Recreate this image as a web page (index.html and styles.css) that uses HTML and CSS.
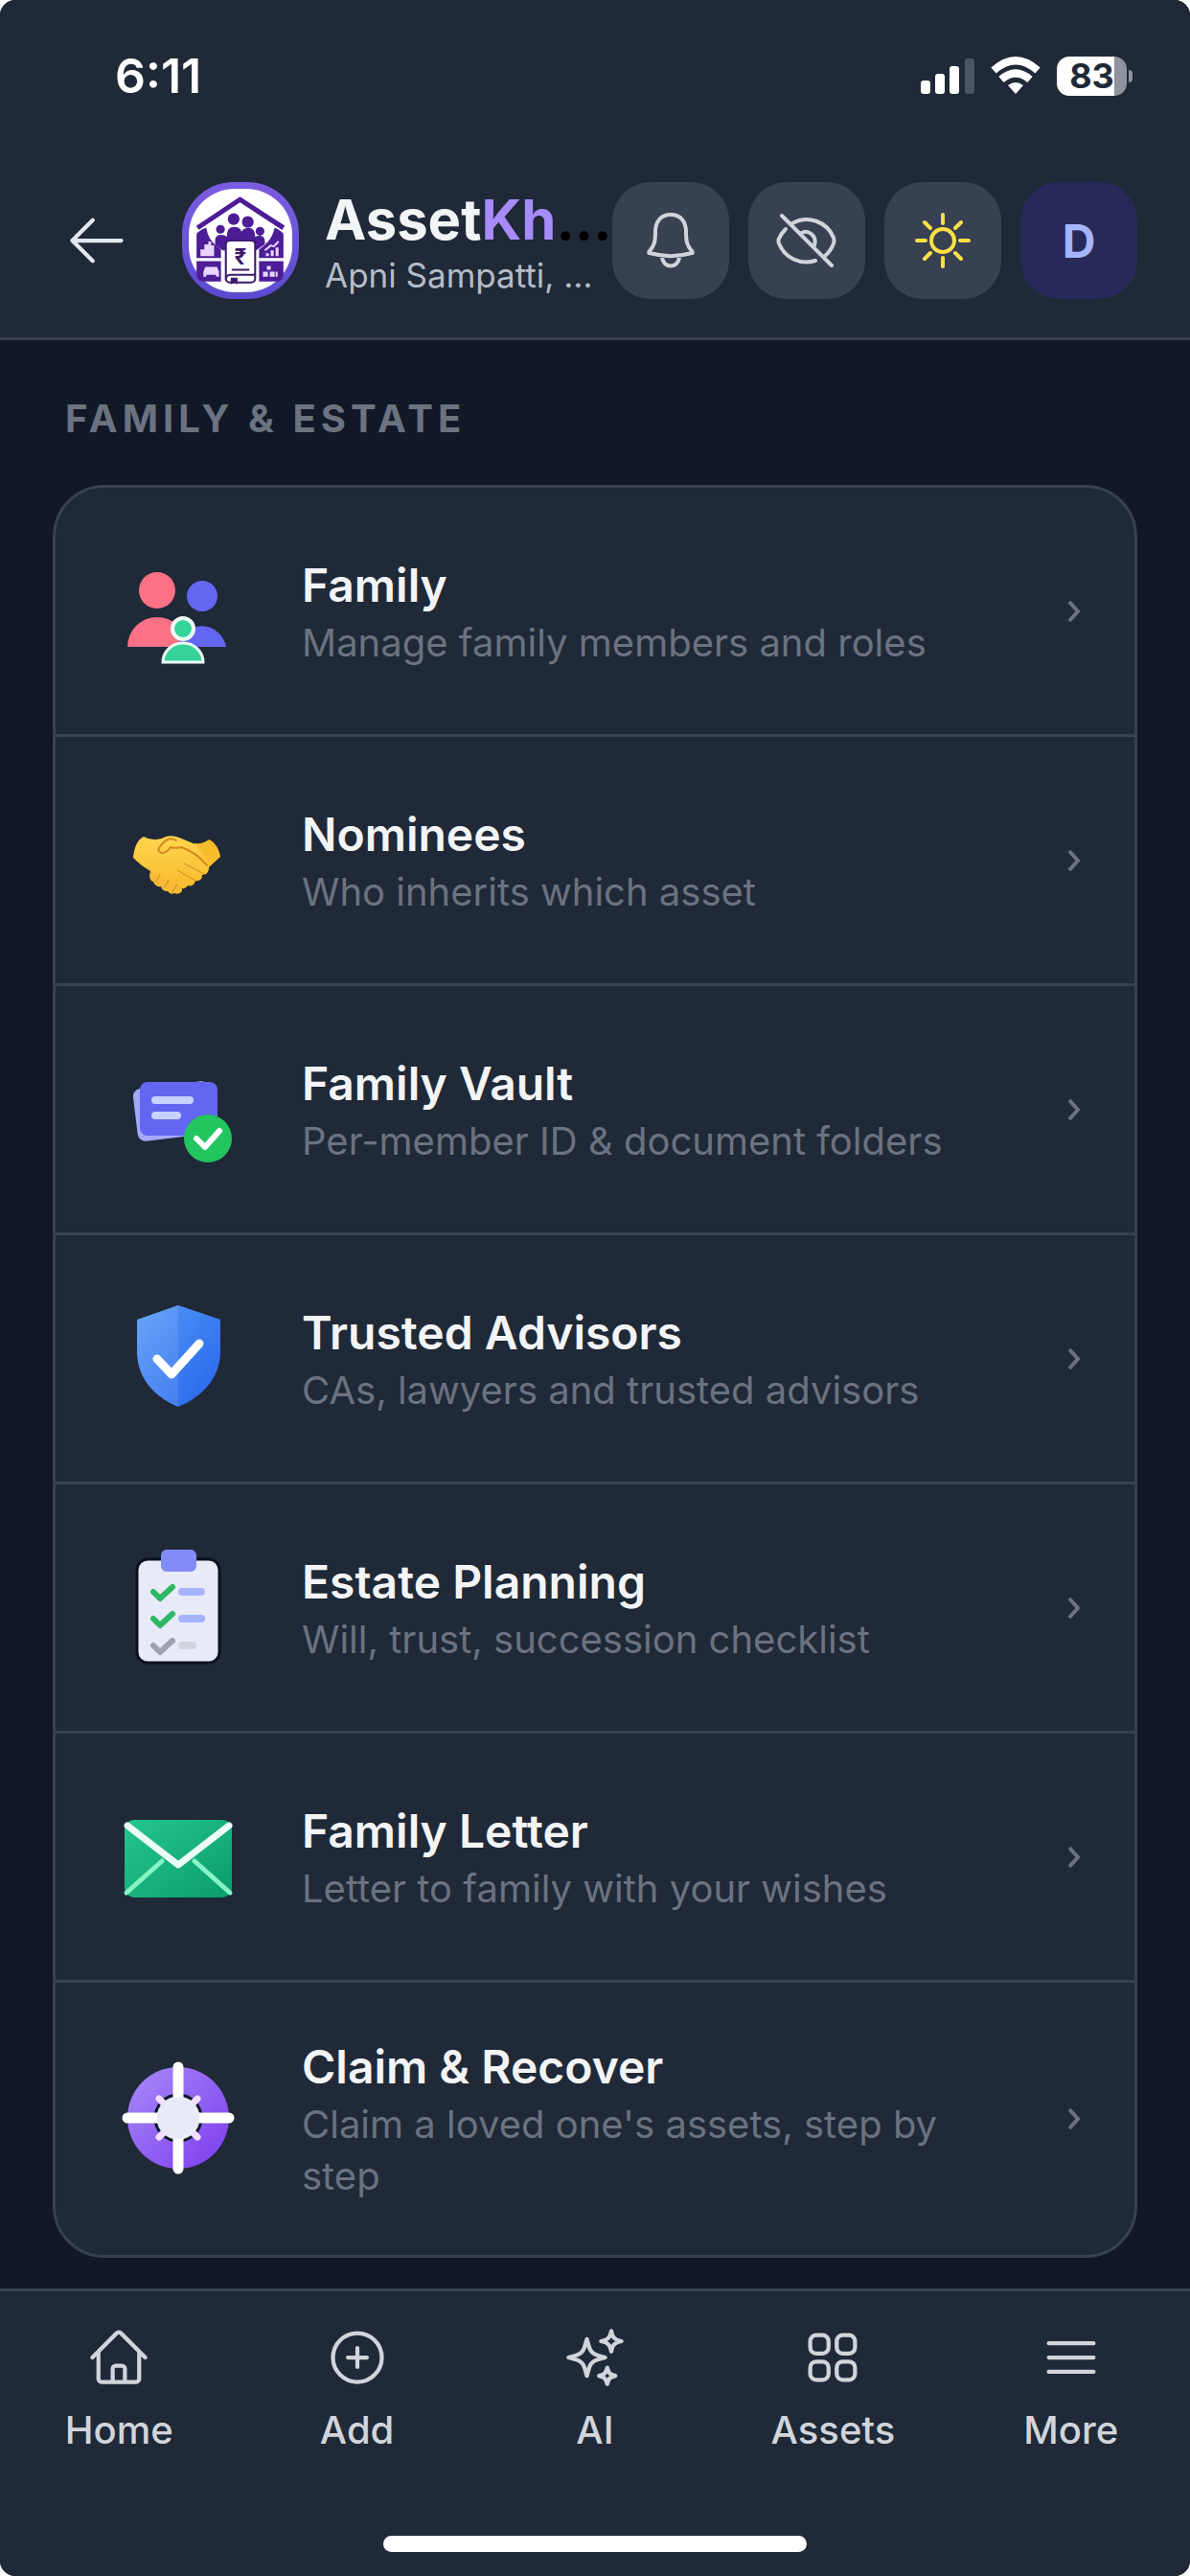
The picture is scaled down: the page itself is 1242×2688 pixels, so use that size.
FILE: index.html
```html
<!DOCTYPE html>
<html lang="en">
<head>
    <meta charset="UTF-8">
    <meta name="viewport" content="width=device-width, initial-scale=1.0">
    <title>Family &amp; Estate</title>
    <link rel="stylesheet" href="styles.css">
</head>
<body>
    <div class="app">
        <header class="top">
            <div class="status-bar">
                <span class="time">6:11</span>
                <div class="status-icons">
                    <svg width="56" height="40" viewBox="0 0 56 40" fill="#fff">
                        <rect x="0" y="25" width="10" height="14" rx="3"/>
                        <rect x="15" y="18" width="10" height="21" rx="3"/>
                        <rect x="30" y="10" width="10" height="29" rx="3"/>
                        <rect x="46" y="2" width="10" height="37" rx="3" fill="#4b5563"/>
                    </svg>
                    <svg width="52" height="40" viewBox="0 0 52 40" fill="none" stroke="#fff" stroke-width="8">
                        <path d="M3 14.500Q26 -6 49 14.500"/>
                        <path d="M11 24Q26 11 41 24"/>
                        <path d="M26 39l-8-9q8-6 16 0z" fill="#fff" stroke="none"/>
                    </svg>
                    <div class="battery"><span class="battery-level">83</span></div>
                </div>
            </div>
            <div class="toolbar">
                <button class="back" aria-label="Back">
                    <svg class="icon" viewBox="0 0 24 24"><path d="M10.500 19.500 3 12m0 0 7.500-7.500M3 12h18"/></svg>
                </button>
                <div class="logo">
                    <svg viewBox="8 8 106 106">
                        <g fill="#4c1d95">
                            <path d="M17 48 60.500 19 105 48" fill="none" stroke="#4c1d95" stroke-width="5"/>
                            <path d="M16 54q5-5 10-6 2 14 15 22v9H16z"/>
                            <path d="M16 82h25v21H24q-8 0-8-8z"/>
                            <path d="M105 54q-5-5-9-6-3 14-16 22v9h25z"/>
                            <path d="M80 82h25v13q0 8-8 8H80z"/>
                            <circle cx="54" cy="39" r="6"/>
                            <circle cx="68.500" cy="42" r="6"/>
                            <circle cx="40.500" cy="49.500" r="4.500"/>
                            <circle cx="81" cy="51.500" r="4.500"/>
                            <path d="M35 66v-5q0-6 6-6 4 0 6 2 0-10 7-10t8 5q2-4 7-4 7 0 7 9 2-1 5-1 5 0 5 6v3l-9 6H43z"/>
                        </g>
                        <rect x="46" y="61" width="30" height="43" rx="4" fill="#fff" stroke="#3b1a6b" stroke-width="2"/>
                        <path d="M46 101q0-5 5-5h25M52 91h18" fill="none" stroke="#3b1a6b" stroke-width="2"/>
                        <path d="M51 99h7v7l-3-2-4 2z" fill="#3b1a6b"/>
                        <text class="rupee" x="61" y="86">₹</text>
                        <g fill="#e9d5ff">
                            <path d="M20 77V70h4v-5h4v-3h3v4h3v11z"/>
                            <path d="M23 93l2-5h12l2 5v5h-3v-2H26v2h-3z"/>
                            <path d="M87 77v-3h3v3zM92 77v-6h3v6zM97 77v-9h3v9z"/>
                            <path d="M84 98v-5h5v5zM91 98v-5h5v5zM97 98v-5h2v5zM88 91v-4h4v4z"/>
                        </g>
                        <path d="M86 71l6-5 3 1 5-5" fill="none" stroke="#e9d5ff" stroke-width="2"/>
                    </svg>
                </div>
                <div class="brand">
                    <h1><span class="brand-asset">Asset</span><span class="brand-accent">Kh</span>…</h1>
                    <p>Apni Sampatti, …</p>
                </div>
                <div class="actions">
                    <button class="action" aria-label="Notifications">
                        <svg class="icon" viewBox="0 0 68 68"><path d="M34 7C23 7 18 15 18 25c0 10-1 14-6 20-1 1-1 2 0 2 14 4 30 4 44 0 1 0 1-1 0-2-5-6-6-10-6-20C50 15 45 7 34 7zM25 50c0 14 18 14 18 0"/></svg>
                    </button>
                    <button class="action" aria-label="Hide values">
                        <svg class="icon" viewBox="0 0 68 68"><path d="M8 8l52 52M19 16c16-9 36-2 43 15q1 3 0 6-3 8-9 13M12 22q-5 5-7 10-1 2 0 5c6 15 22 23 38 18M27 27c8-6 18 2 15 12"/></svg>
                    </button>
                    <button class="action action-theme" aria-label="Light mode">
                        <svg class="icon" viewBox="0 0 68 68"><circle cx="34" cy="34" r="12"/><path d="M34 7v9M34 52v9M7 34h9M52 34h9M15 15l6 6M47 47l6 6M15 53l6-6M47 21l6-6"/></svg>
                    </button>
                    <button class="action action-user" aria-label="Profile">D</button>
                </div>
            </div>
        </header>

        <main class="content">
            <h2>FAMILY &amp; ESTATE</h2>
            <nav class="card">
                <a class="row" href="#family">
                    <svg class="row-icon" viewBox="0 0 120 120">
                        <circle cx="38" cy="38" r="19" fill="#fb7185"/>
                        <path d="M7 97a31 31 0 0 1 62 0z" fill="#fb7185"/>
                        <circle cx="85" cy="44" r="16" fill="#6366f1"/>
                        <path d="M59 97a26 27 0 0 1 51 0z" fill="#6366f1"/>
                        <circle cx="65" cy="78" r="11" fill="#34d399" stroke="#ecfdf5" stroke-width="4"/>
                        <path d="M44 113a21 20 0 0 1 42 0z" fill="#34d399" stroke="#ecfdf5" stroke-width="3"/>
                    </svg>
                    <div class="row-text">
                        <h3>Family</h3>
                        <p>Manage family members and roles</p>
                    </div>
                    <svg class="chevron" viewBox="0 0 16 24"><path d="M4 2l9 10-9 10"/></svg>
                </a>
                <a class="row" href="#nominees">
                    <svg class="row-icon" viewBox="0 0 120 120">
                        <defs>
                            <linearGradient id="hand" x1="0" y1="0" x2="0" y2="1">
                                <stop offset="0" stop-color="#ffd54f"/>
                                <stop offset="1" stop-color="#f8bb2d"/>
                            </linearGradient>
                        </defs>
                        <path d="M77 42q9 1 15-4c7 3 11 11 12 18L92 67 70 60z" fill="#f8bd2c"/>
                        <path d="M31 71q4-2 8 4 8-2 11 5 7-1 8 6 7 0 6 6-3 4-8 2-4 2-7-2-6 0-7-5-6 1-8-5-6-2-3-11z" fill="#f6ba36"/>
                        <path d="M13 57C14 47 17 38 24 35q5 3 13 3 5 0 10-3 7-2 14 1l17 7c6 8 10 13 13 20q3 7-2 11l-4 1q0 7-7 6-2 7-8 5-3 5-8 2c-9-6-19-10-31-17-7-4-13-9-18-14z" fill="url(#hand)"/>
                        <g fill="none" stroke="#d08a1c" stroke-width="2" stroke-linecap="round">
                            <path d="M58 39c-8-5-15 2-19 10 4 6 10 2 13-3 5 2 8 0 11 0 9 3 19 9 27 19"/>
                            <path d="M66 63l21 11M59 70l19 11" stroke-width="1"/>
                            <path d="M41 74l-4 8M50 80l-4 8M58 86l-4 7" stroke-width="1"/>
                        </g>
                    </svg>
                    <div class="row-text">
                        <h3>Nominees</h3>
                        <p>Who inherits which asset</p>
                    </div>
                    <svg class="chevron" viewBox="0 0 16 24"><path d="M4 2l9 10-9 10"/></svg>
                </a>
                <a class="row" href="#vault">
                    <svg class="row-icon" viewBox="0 0 120 120">
                        <rect x="15" y="34" width="80" height="55" rx="8" fill="#a5a8fa" transform="rotate(-7 55 61)"/>
                        <rect x="20" y="31" width="81" height="56" rx="8" fill="#6366f1"/>
                        <path d="M36 50h36M36 66h23" stroke="#c7d2fe" stroke-width="8" stroke-linecap="round"/>
                        <circle cx="91" cy="90" r="25" fill="#22c55e"/>
                        <path d="M79 90l9 9 15-17" fill="none" stroke="#fff" stroke-width="6" stroke-linecap="round" stroke-linejoin="round"/>
                    </svg>
                    <div class="row-text">
                        <h3>Family Vault</h3>
                        <p>Per-member ID &amp; document folders</p>
                    </div>
                    <svg class="chevron" viewBox="0 0 16 24"><path d="M4 2l9 10-9 10"/></svg>
                </a>
                <a class="row" href="#advisors">
                    <svg class="row-icon" viewBox="0 0 120 120">
                        <defs>
                            <linearGradient id="shield" x1="0" y1="0" x2="1" y2="1">
                                <stop offset="0" stop-color="#559bf8"/>
                                <stop offset="1" stop-color="#2563eb"/>
                            </linearGradient>
                        </defs>
                        <path d="M60 4l44 15v33c0 26-16 46-44 58C32 98 17 78 17 52V19z" fill="url(#shield)"/>
                        <path d="M60 4v106C32 98 17 78 17 52V19z" fill="#fff" opacity="0.100"/>
                        <path d="M38 60l15 16 29-32" fill="none" stroke="#fff" stroke-width="9" stroke-linecap="round" stroke-linejoin="round"/>
                    </svg>
                    <div class="row-text">
                        <h3>Trusted Advisors</h3>
                        <p>CAs, lawyers and trusted advisors</p>
                    </div>
                    <svg class="chevron" viewBox="0 0 16 24"><path d="M4 2l9 10-9 10"/></svg>
                </a>
                <a class="row" href="#estate">
                    <svg class="row-icon" viewBox="0 0 120 120">
                        <rect x="17" y="9" width="86" height="108" rx="11" fill="#e8eaf8" stroke="#0b1120" stroke-width="3"/>
                        <rect x="42" y="-1" width="37" height="23" rx="6" fill="#818cf8"/>
                        <g fill="none" stroke-linecap="round" stroke-linejoin="round" stroke-width="6">
                            <path d="M34 43l7 7 13-12M34 71l7 7 13-12" stroke="#2fb863"/>
                            <path d="M34 99l7 7 13-12" stroke="#9ca3af"/>
                        </g>
                        <g stroke-linecap="round" stroke-width="8">
                            <path d="M64 43h20M64 71h20" stroke="#a5b4fc"/>
                            <path d="M64 99h11" stroke="#d1d5db"/>
                        </g>
                    </svg>
                    <div class="row-text">
                        <h3>Estate Planning</h3>
                        <p>Will, trust, succession checklist</p>
                    </div>
                    <svg class="chevron" viewBox="0 0 16 24"><path d="M4 2l9 10-9 10"/></svg>
                </a>
                <a class="row" href="#letter">
                    <svg class="row-icon" viewBox="0 0 120 120">
                        <defs>
                            <linearGradient id="mail" x1="0" y1="0" x2="1" y2="1">
                                <stop offset="0" stop-color="#25c690"/>
                                <stop offset="1" stop-color="#0b9c6c"/>
                            </linearGradient>
                        </defs>
                        <rect x="4" y="21" width="112" height="81" rx="10" fill="url(#mail)"/>
                        <path d="M6 97l37-33M114 97L77 64" stroke="#86f5c6" stroke-width="5" stroke-linecap="round"/>
                        <path d="M7 27l53 41 53-41" fill="none" stroke="#ecfdf5" stroke-width="7" stroke-linecap="round" stroke-linejoin="round"/>
                    </svg>
                    <div class="row-text">
                        <h3>Family Letter</h3>
                        <p>Letter to family with your wishes</p>
                    </div>
                    <svg class="chevron" viewBox="0 0 16 24"><path d="M4 2l9 10-9 10"/></svg>
                </a>
                <a class="row" href="#claim">
                    <svg class="row-icon" viewBox="0 0 120 120">
                        <defs>
                            <linearGradient id="claim" x1="0" y1="0" x2="1" y2="1">
                                <stop offset="0" stop-color="#a78bfa"/>
                                <stop offset="1" stop-color="#7c3aed"/>
                            </linearGradient>
                        </defs>
                        <circle cx="60" cy="59" r="53" fill="url(#claim)"/>
                        <circle cx="60" cy="59" r="24" fill="#e8eaf8" stroke="#111827" stroke-width="3"/>
                        <path d="M40 39l8 8M80 39l-8 8M40 79l8-8M80 79l-8-8" stroke="#f3e0ff" stroke-width="7" stroke-linecap="round"/>
                        <path d="M60 6v34M60 78v34M7 59h34M79 59h34" stroke="#fff" stroke-width="11" stroke-linecap="round"/>
                        <circle cx="60" cy="59" r="22" fill="#e8eaf8"/>
                    </svg>
                    <div class="row-text">
                        <h3>Claim &amp; Recover</h3>
                        <p>Claim a loved one's assets, step by step</p>
                    </div>
                    <svg class="chevron" viewBox="0 0 16 24"><path d="M4 2l9 10-9 10"/></svg>
                </a>
            </nav>
        </main>

        <footer class="bottom">
            <nav class="tabs">
                <a class="tab" href="#home">
                    <svg class="icon" viewBox="0 0 24 24"><path d="M2.250 12l8.954-8.955a1.130 1.130 0 0 1 1.592 0L21.750 12M4.500 9.750v10.125c0 .621.504 1.125 1.125 1.125H9.750v-4.875c0-.621.504-1.125 1.125-1.125h2.250c.621 0 1.125.504 1.125 1.125V21h4.125c.621 0 1.125-.504 1.125-1.125V9.750M8.250 21h8.250"/></svg>
                    <span>Home</span>
                </a>
                <a class="tab" href="#add">
                    <svg class="icon" viewBox="0 0 24 24"><circle cx="12" cy="12" r="9"/><path d="M12 8.500v7M8.500 12h7"/></svg>
                    <span>Add</span>
                </a>
                <a class="tab" href="#ai">
                    <svg class="icon" viewBox="0 0 24 24"><path d="M9.813 15.904 9 18.750l-.813-2.846a4.500 4.500 0 0 0-3.090-3.090L2.250 12l2.846-.813a4.500 4.500 0 0 0 3.090-3.090L9 5.250l.813 2.846a4.500 4.500 0 0 0 3.090 3.090L15.750 12l-2.846.813a4.500 4.500 0 0 0-3.090 3.090ZM18.259 8.715 18 9.750l-.259-1.035a3.375 3.375 0 0 0-2.455-2.456L14.250 6l1.036-.259a3.375 3.375 0 0 0 2.455-2.456L18 2.250l.259 1.035a3.375 3.375 0 0 0 2.456 2.456L21.750 6l-1.035.259a3.375 3.375 0 0 0-2.456 2.456ZM16.894 20.567 16.500 21.750l-.394-1.183a2.250 2.250 0 0 0-1.423-1.423L13.500 18.750l1.183-.394a2.250 2.250 0 0 0 1.423-1.423l.394-1.183.394 1.183a2.250 2.250 0 0 0 1.423 1.423l1.183.394-1.183.394a2.250 2.250 0 0 0-1.423 1.423Z"/></svg>
                    <span>AI</span>
                </a>
                <a class="tab" href="#assets">
                    <svg class="icon" viewBox="0 0 24 24"><rect x="3.750" y="3.750" width="6.750" height="6.750" rx="2.250"/><rect x="13.500" y="3.750" width="6.750" height="6.750" rx="2.250"/><rect x="3.750" y="13.500" width="6.750" height="6.750" rx="2.250"/><rect x="13.500" y="13.500" width="6.750" height="6.750" rx="2.250"/></svg>
                    <span>Assets</span>
                </a>
                <a class="tab" href="#more">
                    <svg class="icon" viewBox="0 0 24 24"><path d="M3.750 6.750h16.500M3.750 12h16.500M3.750 17.250h16.500"/></svg>
                    <span>More</span>
                </a>
            </nav>
            <div class="home-indicator"></div>
        </footer>
    </div>
</body>
</html>
```

FILE: styles.css
```css
* {
    box-sizing: border-box;
}
body {
    margin: 0;
    background: #fff;
    font-family: Inter, "Liberation Sans", sans-serif;
}
h1, h2, h3, p {
    margin: 0;
}
a {
    color: inherit;
    text-decoration: none;
}
button {
    padding: 0;
    border: none;
    background: none;
    font-family: inherit;
    cursor: pointer;
}
svg {
    display: block;
    flex: none;
    overflow: visible;
}
.app {
    display: flex;
    flex-direction: column;
    min-height: 100vh;
    background: #111827;
    border-radius: 16px;
    overflow: hidden;
}

/* header */
.top {
    background: #1f2937;
    border-bottom: 3px solid #374151;
}
.status-bar {
    display: flex;
    align-items: center;
    justify-content: space-between;
    height: 158px;
    padding: 0 60px 0 120px;
}
.time {
    color: #fff;
    font-size: 50px;
    font-weight: 600;
}
.status-icons {
    display: flex;
    align-items: center;
    gap: 17px;
}
.battery {
    position: relative;
    width: 73px;
    height: 41px;
    margin-right: 6px;
    border-radius: 13px;
    background: linear-gradient(to right, #fff 82%, #8e939c 82%);
    text-align: center;
}
.battery::after {
    content: "";
    position: absolute;
    top: 14px;
    right: -6px;
    width: 4px;
    height: 13px;
    border-radius: 0 4px 4px 0;
    background: #8e939c;
}
.battery-level {
    color: #1f2937;
    font-size: 36px;
    font-weight: 700;
    line-height: 41px;
}
.toolbar {
    display: flex;
    align-items: center;
    padding: 32px 55px 40px 67px;
}
.icon {
    width: 68px;
    height: 68px;
    fill: none;
    stroke: currentColor;
    stroke-width: 1.5;
    stroke-linecap: round;
    stroke-linejoin: round;
}
.back {
    margin-right: 55px;
    color: #e2e8f0;
}
.logo {
    flex: none;
    width: 122px;
    height: 122px;
    margin-right: 27px;
    padding: 7px;
    border-radius: 54px;
    background: linear-gradient(#7c5ce0, #5b4bd0);
}
.logo svg {
    border-radius: 48px;
    background: #fff;
}
.rupee {
    fill: #3b1a6b;
    font-size: 22px;
    font-weight: 700;
    text-anchor: middle;
}
.brand {
    flex: 1;
    min-width: 0;
    white-space: nowrap;
}
.brand h1 {
    color: #000;
    font-size: 58px;
    font-weight: 700;
    line-height: 72px;
}
.brand-asset {
    color: #f3f4f6;
}
.brand-accent {
    color: #a78bfa;
}
.brand p {
    color: #b4bcc8;
    font-size: 35px;
    line-height: 44px;
}
.actions {
    display: flex;
    gap: 20px;
}
.action {
    display: flex;
    align-items: center;
    justify-content: center;
    width: 122px;
    height: 122px;
    border-radius: 40px;
    background: #374151;
    color: #d1d5db;
}
.action .icon {
    stroke-width: 4;
}
.action-theme {
    color: #fde047;
}
.action-user {
    background: #272a58;
    color: #a5b4fc;
    font-size: 48px;
    font-weight: 700;
}

/* list */
.content {
    flex: 1;
    padding: 55px 55px 32px;
}
h2 {
    margin-bottom: 42px;
    padding-left: 13px;
    color: #6b7280;
    font-size: 40px;
    font-weight: 700;
    line-height: 54px;
    letter-spacing: 5px;
}
.card {
    border: 3px solid #374151;
    border-radius: 54px;
    background: #1f2937;
    overflow: hidden;
}
.row {
    display: flex;
    align-items: center;
    min-height: 260px;
    padding: 55px 56px 55px 68px;
    border-bottom: 3px solid #374151;
}
.row:last-child {
    border-bottom: none;
}
.row-icon {
    width: 120px;
    height: 120px;
    margin-right: 69px;
}
.row-text {
    flex: 1;
    min-width: 0;
    margin-right: 52px;
}
.row h3 {
    color: #f3f4f6;
    font-size: 48px;
    font-weight: 600;
    line-height: 66px;
}
.row p {
    color: #6b7280;
    font-size: 40px;
    line-height: 54px;
}
.chevron {
    width: 16px;
    height: 24px;
    fill: none;
    stroke: #6b7280;
    stroke-width: 4;
}

/* bottom tabs */
.bottom {
    background: #1f2937;
    border-top: 3px solid #374151;
}
.tabs {
    display: grid;
    grid-template-columns: repeat(5, 1fr);
    padding-top: 35px;
}
.tab {
    display: flex;
    flex-direction: column;
    align-items: center;
    gap: 18px;
    color: #d1d5db;
    font-size: 40px;
    font-weight: 500;
    line-height: 48px;
}
.home-indicator {
    width: 442px;
    height: 17px;
    margin: 86px auto 25px;
    border-radius: 9px;
    background: #fff;
}
```
